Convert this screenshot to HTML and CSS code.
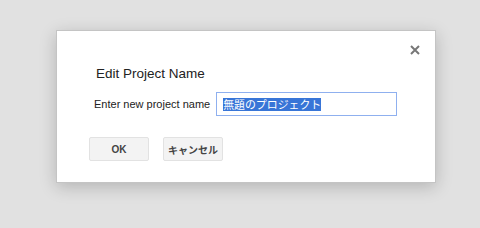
FILE: index.html
```html
<!DOCTYPE html>
<html lang="ja">
<head>
<meta charset="utf-8">
<title>Edit Project Name</title>
<link rel="stylesheet" href="styles.css">
</head>
<body>
<div class="dialog" role="dialog">
  <button class="close" aria-label="Close">
    <svg width="10" height="10" viewBox="0 0 10 10"><path d="M1 1 L9 9 M9 1 L1 9" stroke="#777" stroke-width="2" fill="none"/></svg>
  </button>
  <div class="content">
    <div class="title">Edit Project Name</div>
    <div class="row">
      <label class="label">Enter new project name</label>
      <div class="input"><span class="sel">無題のプロジェクト</span></div>
    </div>
  </div>
  <div class="buttons">
    <button class="btn">OK</button>
    <button class="btn">キャンセル</button>
  </div>
</div>
</body>
</html>
```
FILE: styles.css
```css
html, body {
  margin: 0;
  padding: 0;
}
body {
  width: 480px;
  height: 228px;
  background: #e1e1e1;
  font-family: "Liberation Sans", Arial, "Noto Sans CJK JP", sans-serif;
  padding: 30px 0 0 56px;
  box-sizing: border-box;
}
.dialog {
  position: relative;
  width: 380px;
  height: 153px;
  box-sizing: border-box;
  background: #fff;
  border: 1px solid #c4c4c4;
  box-shadow: 0 4px 16px rgba(0, 0, 0, 0.2);
  display: flex;
  flex-direction: column;
}
.close {
  position: absolute;
  top: 14px;
  right: 15px;
  width: 10px;
  height: 10px;
  padding: 0;
  margin: 0;
  border: 0;
  background: none;
  display: flex;
}
.content {
  padding: 33px 0 0 39px;
}
.title {
  font-size: 13.5px;
  line-height: 20px;
  color: #222;
}
.row {
  display: flex;
  align-items: center;
  margin-top: 8px;
  gap: 6px;
}
.label {
  font-size: 11px;
  color: #222;
  margin-left: -2px;
}
.input {
  width: 181px;
  height: 24px;
  box-sizing: border-box;
  border: 1px solid #8fb0ef;
  padding-left: 6px;
  display: flex;
  align-items: center;
}
.sel {
  display: inline-block;
  font-family: "Noto Sans CJK JP", sans-serif;
  font-size: 10.9px;
  line-height: 13px;
  background: #3875d7;
  color: #fff;
}
.buttons {
  display: flex;
  gap: 14px;
  padding: 21px 0 0 32px;
}
.btn {
  width: 60px;
  height: 24px;
  box-sizing: border-box;
  padding: 0;
  margin: 0;
  background: #f3f3f3;
  border: 1px solid #e2e2e2;
  border-radius: 2px;
  color: #444;
  font-family: "Liberation Sans", Arial, "Noto Sans CJK JP", sans-serif;
  font-size: 10px;
  font-weight: bold;
}
```
